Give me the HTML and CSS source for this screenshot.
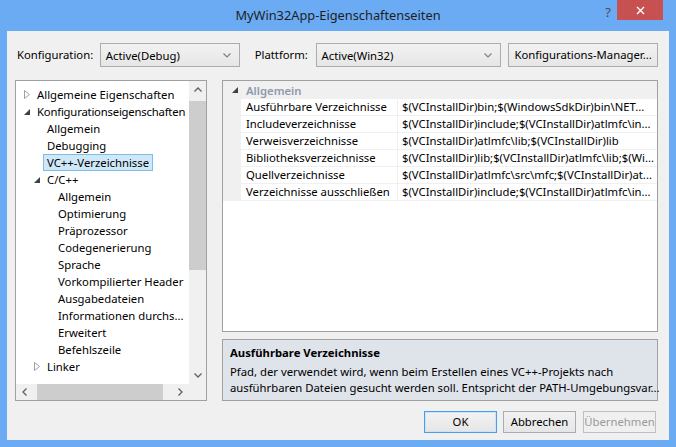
FILE: index.html
```html
<!DOCTYPE html>
<html lang="de">
<head>
<meta charset="utf-8">
<title>MyWin32App-Eigenschaftenseiten</title>
<link rel="stylesheet" href="styles.css">
</head>
<body>
<div class="window">
  <div class="titlebar">
    <div class="title">MyWin32App-Eigenschaftenseiten</div>
    <div class="controls">
      <div class="help">?</div>
      <div class="close"><svg width="9" height="9" viewBox="0 0 9 9"><path d="M1 1 L8 8 M8 1 L1 8" stroke="#fff" stroke-width="1.4" fill="none"/></svg></div>
    </div>
  </div>
  <div class="client">
    <div class="toolbar">
      <span class="lbl lbl-config">Konfiguration:</span>
      <div class="combo combo-config"><span>Active(Debug)</span><svg class="chev" width="8" height="5" viewBox="0 0 8 5"><path d="M0.5 0.5 L4 4 L7.5 0.5" stroke="#808080" stroke-width="1.2" fill="none"/></svg></div>
      <span class="lbl lbl-plat">Plattform:</span>
      <div class="combo combo-plat"><span>Active(Win32)</span><svg class="chev" width="8" height="5" viewBox="0 0 8 5"><path d="M0.5 0.5 L4 4 L7.5 0.5" stroke="#808080" stroke-width="1.2" fill="none"/></svg></div>
      <div class="btn btn-manager">Konfigurations-Manager...</div>
    </div>
    <div class="main">
      <div class="tree">
        <div class="tree-body">
          <ul class="tree-list">
            <li class="node l0"><span class="twisty"><svg width="6" height="9" viewBox="0 0 6 9"><path d="M0.5 0.5 L5.5 4.5 L0.5 8.5 Z" stroke="#a0a0a0" fill="none"/></svg></span>Allgemeine Eigenschaften</li>
            <li class="node l0 tight"><span class="twisty"><svg width="6" height="6" viewBox="0 0 6 6"><path d="M6 0 L6 6 L0 6 Z" fill="#404040"/></svg></span>Konfigurationseigenschaften</li>
            <li class="node l1">Allgemein</li>
            <li class="node l1">Debugging</li>
            <li class="node l1 sel"><span class="sel-box">VC++-Verzeichnisse</span></li>
            <li class="node l1t"><span class="twisty"><svg width="6" height="6" viewBox="0 0 6 6"><path d="M6 0 L6 6 L0 6 Z" fill="#404040"/></svg></span>C/C++</li>
            <li class="node l2">Allgemein</li>
            <li class="node l2">Optimierung</li>
            <li class="node l2">Präprozessor</li>
            <li class="node l2">Codegenerierung</li>
            <li class="node l2">Sprache</li>
            <li class="node l2">Vorkompilierter Header</li>
            <li class="node l2">Ausgabedateien</li>
            <li class="node l2">Informationen durchs...</li>
            <li class="node l2">Erweitert</li>
            <li class="node l2">Befehlszeile</li>
            <li class="node l1t"><span class="twisty"><svg width="6" height="9" viewBox="0 0 6 9"><path d="M0.5 0.5 L5.5 4.5 L0.5 8.5 Z" stroke="#a0a0a0" fill="none"/></svg></span>Linker</li>
          </ul>
          <div class="vscroll">
            <div class="sb-btn"><svg width="8" height="5" viewBox="0 0 8 5"><path d="M0.5 4.5 L4 1 L7.5 4.5" stroke="#606060" stroke-width="1.3" fill="none"/></svg></div>
            <div class="vthumb"></div>
            <div class="sb-fill"></div>
            <div class="sb-btn"><svg width="8" height="5" viewBox="0 0 8 5"><path d="M0.5 0.5 L4 4 L7.5 0.5" stroke="#606060" stroke-width="1.3" fill="none"/></svg></div>
          </div>
        </div>
        <div class="hscroll-row">
          <div class="hscroll">
            <div class="sb-hbtn"><svg width="5" height="8" viewBox="0 0 5 8"><path d="M4.5 0.5 L1 4 L4.5 7.5" stroke="#606060" stroke-width="1.3" fill="none"/></svg></div>
            <div class="hthumb"></div>
            <div class="sb-fill"></div>
            <div class="sb-hbtn"><svg width="5" height="8" viewBox="0 0 5 8"><path d="M0.5 0.5 L4 4 L0.5 7.5" stroke="#606060" stroke-width="1.3" fill="none"/></svg></div>
          </div>
          <div class="corner"></div>
        </div>
      </div>
      <div class="right">
        <div class="grid">
          <div class="cat-row"><svg class="cat-tw" width="6" height="6" viewBox="0 0 6 6"><path d="M6 0 L6 6 L0 6 Z" fill="#404040"/></svg><span class="cat-name">Allgemein</span></div>
          <div class="prop-row"><div class="gutter"></div><div class="pname">Ausführbare Verzeichnisse</div><div class="pval">$(VCInstallDir)bin;$(WindowsSdkDir)bin\NET...</div></div>
          <div class="prop-row"><div class="gutter"></div><div class="pname">Includeverzeichnisse</div><div class="pval">$(VCInstallDir)include;$(VCInstallDir)atlmfc\in...</div></div>
          <div class="prop-row"><div class="gutter"></div><div class="pname">Verweisverzeichnisse</div><div class="pval">$(VCInstallDir)atlmfc\lib;$(VCInstallDir)lib</div></div>
          <div class="prop-row"><div class="gutter"></div><div class="pname">Bibliotheksverzeichnisse</div><div class="pval">$(VCInstallDir)lib;$(VCInstallDir)atlmfc\lib;$(Wi...</div></div>
          <div class="prop-row"><div class="gutter"></div><div class="pname">Quellverzeichnisse</div><div class="pval">$(VCInstallDir)atlmfc\src\mfc;$(VCInstallDir)at...</div></div>
          <div class="prop-row"><div class="gutter"></div><div class="pname">Verzeichnisse ausschließen</div><div class="pval">$(VCInstallDir)include;$(VCInstallDir)atlmfc\in...</div></div>
        </div>
        <div class="desc">
          <div class="desc-title">Ausführbare Verzeichnisse</div>
          <div class="desc-text">Pfad, der verwendet wird, wenn beim Erstellen eines VC++-Projekts nach<br>ausführbaren Dateien gesucht werden soll. Entspricht der PATH-Umgebungsvar...</div>
        </div>
      </div>
    </div>
    <div class="buttons">
      <div class="btn dlg ok">OK</div>
      <div class="btn dlg cancel">Abbrechen</div>
      <div class="btn dlg apply">Übernehmen</div>
    </div>
  </div>
</div>
</body>
</html>
```
FILE: styles.css
```css
* { box-sizing: border-box; }
html, body { margin: 0; padding: 0; }
body {
  width: 676px;
  height: 447px;
  overflow: hidden;
  background: #6aabf4;
  font-family: "Noto Sans", "Open Sans", sans-serif;
  font-size: 11.3px;
  color: #000;
}
.window { display: flex; flex-direction: column; height: 447px; }

.titlebar {
  height: 31px;
  display: grid;
  grid-template-columns: 1fr auto 1fr;
}
.title {
  grid-column: 2;
  font-size: 12.8px;
  line-height: 30px;
  color: #1e1e1e;
}
.controls {
  grid-column: 3;
  display: flex;
  justify-content: flex-end;
  align-items: flex-start;
  padding-right: 13px;
}
.help {
  font-size: 13px;
  line-height: 24px;
  color: #4a4a4a;
  margin-right: 6px;
}
.close {
  width: 46px;
  height: 20px;
  background: #c75050;
  display: flex;
  align-items: center;
  justify-content: center;
}

.client {
  flex: 1;
  margin: 0 7px 7px;
  background: #f0f0f0;
  padding: 12px 11px 0 8px;
}

.toolbar { display: flex; align-items: center; height: 24px; }
.lbl { line-height: 24px; white-space: nowrap; }
.lbl-config { width: 85px; padding-left: 2px; }
.lbl-plat { width: 61px; margin-left: 15px; }
.combo {
  height: 24px;
  border: 1px solid #acacac;
  background: linear-gradient(#f2f2f2, #e6e6e6);
  display: flex;
  align-items: center;
  justify-content: space-between;
  padding: 0 8px 0 5px;
}
.combo-config { width: 140px; }
.combo-plat { width: 186px; }
.btn {
  border: 1px solid #acacac;
  background: linear-gradient(#f2f2f2, #e6e6e6);
  text-align: center;
  white-space: nowrap;
}
.btn-manager { width: 150px; height: 24px; line-height: 22px; margin-left: 7px; }

.main { display: flex; margin-top: 13px; height: 321px; }

.tree {
  width: 192px;
  border: 1px solid #a0a0a0;
  background: #fff;
  display: flex;
  flex-direction: column;
}
.tree-body { flex: 1; display: flex; min-height: 0; }
.tree-list {
  flex: 1;
  min-width: 0;
  list-style: none;
  margin: 0;
  padding: 5px 0 0 0;
  overflow: hidden;
}
.node {
  height: 17px;
  line-height: 17px;
  display: flex;
  align-items: center;
  white-space: nowrap;
}
.tight { letter-spacing: -0.2px; }
.twisty { width: 13px; flex-shrink: 0; display: flex; align-items: center; }
.l0 { padding-left: 8px; }
.l1 { padding-left: 31px; }
.l1t { padding-left: 18px; }
.l2 { padding-left: 42px; }
.sel { padding-left: 27px; }
.sel-box {
  height: 17px;
  line-height: 15px;
  padding: 0 3px;
  background: #cfe8f8;
  border: 1px solid #7fbde6;
}

.vscroll {
  width: 17px;
  flex-shrink: 0;
  background: #f0f0f0;
  display: flex;
  flex-direction: column;
}
.sb-btn { height: 17px; display: flex; align-items: center; justify-content: center; }
.vthumb { margin-top: 3px; height: 169px; background: #cdcdcd; }
.sb-fill { flex: 1; }

.hscroll-row { height: 16px; display: flex; }
.hscroll { flex: 1; background: #f0f0f0; display: flex; }
.sb-hbtn { width: 17px; display: flex; align-items: center; justify-content: center; }
.hthumb { margin-left: 4px; width: 126px; background: #cdcdcd; }
.corner { width: 17px; background: #f0f0f0; }

.right { margin-left: 15px; width: 436px; display: flex; flex-direction: column; }
.grid {
  height: 252px;
  border: 1px solid #a0a0a0;
  background: #fff;
}
.cat-row {
  height: 18px;
  background: #f0f0f0;
  display: flex;
  align-items: center;
  padding-left: 9px;
}
.cat-name { margin-left: 8px; font-weight: 600; color: #8e9aab; }
.prop-row { height: 17px; display: flex; }
.gutter { width: 18px; flex-shrink: 0; background: #f0f0f0; }
.pname {
  width: 157px;
  flex-shrink: 0;
  padding-left: 5px;
  line-height: 16px;
  border-right: 1px solid #f0f0f0;
  border-bottom: 1px solid #f0f0f0;
  white-space: nowrap;
  overflow: hidden;
}
.pval {
  flex: 1;
  min-width: 0;
  padding-left: 4px;
  line-height: 16px;
  border-bottom: 1px solid #f0f0f0;
  white-space: nowrap;
  overflow: hidden;
}

.desc {
  margin-top: 7px;
  height: 62px;
  background: #dfe3ea;
  border: 1px solid #a0a0a0;
  padding: 5px 7px;
}
.desc-title { font-weight: 700; line-height: 16px; margin-bottom: 3px; }
.desc-text { line-height: 16px; white-space: nowrap; }

.buttons {
  display: flex;
  justify-content: flex-end;
  margin-top: 10px;
  padding-right: 2px;
}
.dlg { width: 73px; height: 22px; line-height: 20px; }
.ok { border-color: #4a9ee8; box-shadow: inset 0 0 0 1px #cde3f7; }
.cancel { margin-left: 6px; }
.apply { margin-left: 7px; color: #9a9a9a; border-color: #bfbfbf; background: #f0f0f0; }
```
